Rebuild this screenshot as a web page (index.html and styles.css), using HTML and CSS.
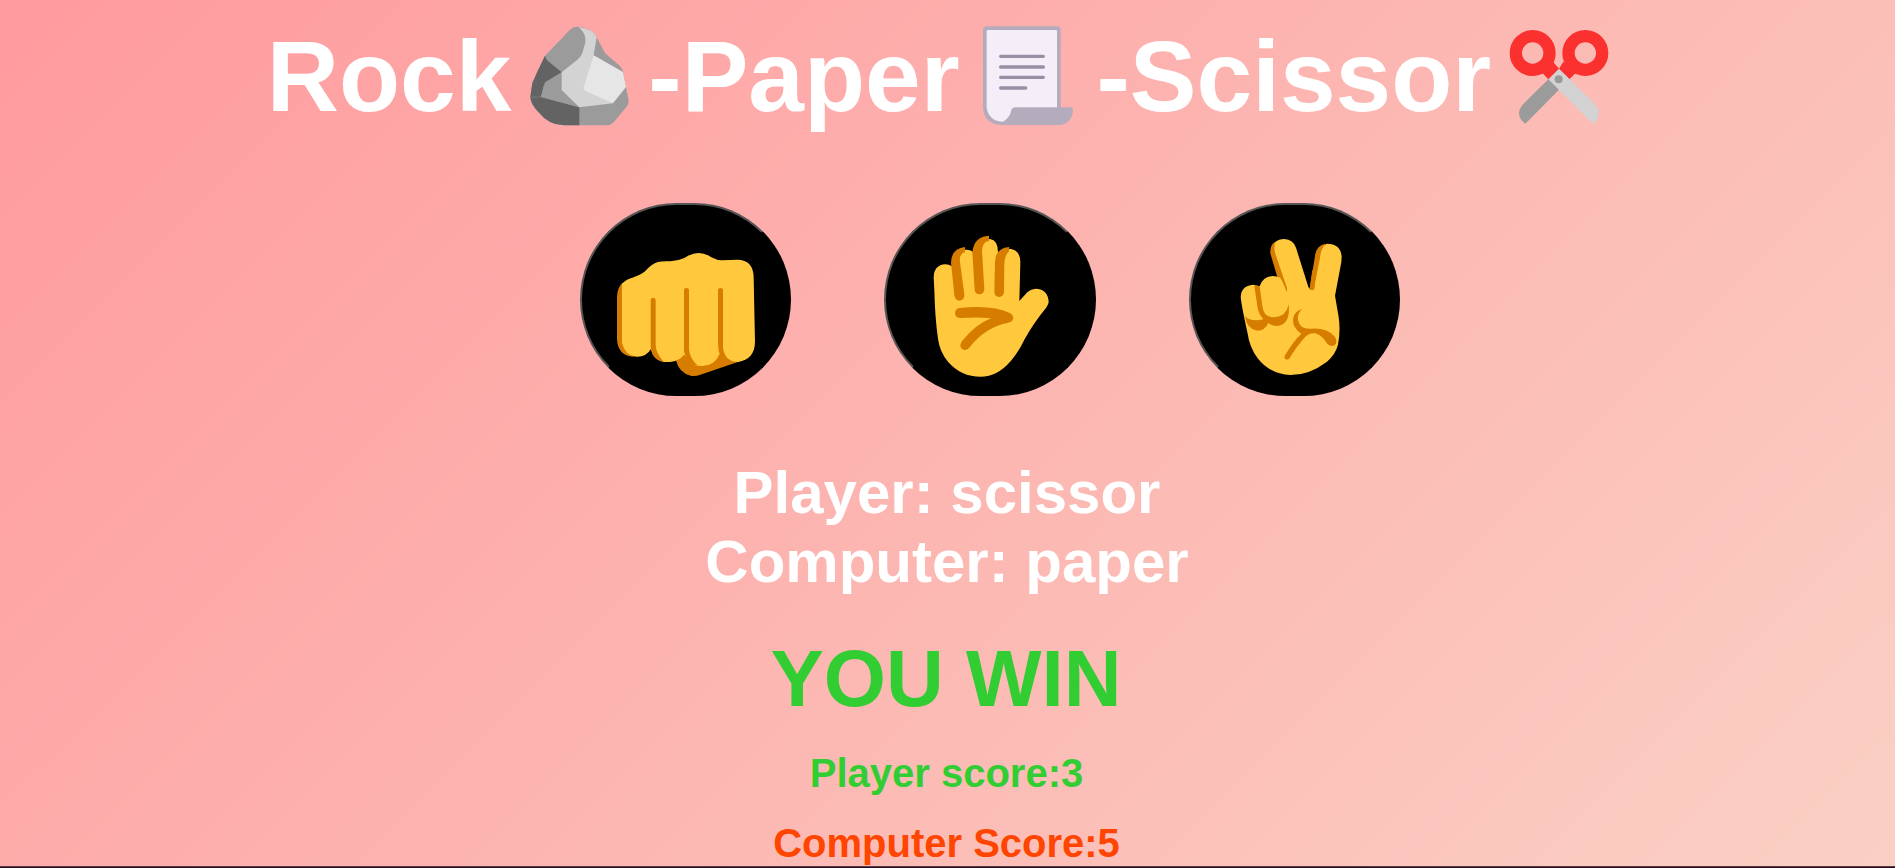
FILE: index.html
```html
<!DOCTYPE html>
<html lang="en">
<head>
<meta charset="utf-8">
<title>Rock Paper Scissor</title>
<link rel="stylesheet" href="styles.css">
</head>
<body>
<main class="game">
  <h1 class="title">
    <span>Rock</span>
    <svg class="title-icon" viewBox="1 0 411 360" aria-hidden="true">
      <path fill="#9b9b9b" d="M103 122L178 44Q187 35 199 35L215 37Q249 47 258 67L283 114L325 151Q337 162 339 180L346 216L354 257Q354 267 348 275L309 322Q300 331 289 331H160Q115 331 83 291Q59 266 59 246L65 204L80 170Z"/>
      <path fill="#636363" d="M103 122L109 136L153 172L103 202L91 246L206 277V331H160Q115 331 83 291Q59 266 59 246L65 204L80 170Z"/>
      <path fill="#9b9b9b" d="M153 172L112 198Q99 206 97 220L91 246L206 277L153 225Z"/>
      <path fill="#d3d3d3" d="M204 36Q249 43 258 67L249 121L307 265L206 277L153 225V172L202 133Q212 124 216 111L223 86Q228 66 215 48Z"/>
      <path fill="#e6e6e6" d="M249 121L337 171L346 216L307 265L226 229Q218 224 220 213Z"/>
      <path fill="none" stroke="#838383" stroke-width="2" d="M59 247L91 246"/>
    </svg>
    <span>-Paper</span>
    <svg class="title-icon" viewBox="0 0 411 360" aria-hidden="true">
      <path fill="#b4acbc" d="M79 34H292Q302 35 302 45V277H330Q339 278 339 288Q335 325 300 330H122Q72 325 69 278V44Q70 35 79 34Z"/>
      <path fill="#f3eef8" d="M84 45H287Q291 45 291 49V277H166Q156 277 154 286Q150 307 130 320Q87 319 80 278V49Q80 45 84 45Z"/>
      <path fill="none" stroke="#998ea4" stroke-width="10" stroke-linecap="round" d="M122 124H250M122 156H250M122 187H250M122 219H197"/>
    </svg>
    <span>-Scissor</span>
    <svg class="title-icon" viewBox="3 0 411 360" aria-hidden="true">
      <path fill="#9b9b9b" d="M207 224L106 326Q87 313 87 293Q88 280 98 269L179 189Z"/>
      <path fill="#fa312f" d="M158 175L177 195L207 163L238 193L257 174L220 140L207 161L189 140Z"/>
      <circle cx="128" cy="114" r="50.5" fill="none" stroke="#fa312f" stroke-width="37"/>
      <circle cx="286" cy="114" r="50.5" fill="none" stroke="#fa312f" stroke-width="37"/>
      <path fill="#d3d3d3" d="M207 161L315 268Q326 280 326 296Q326 313 309 326L175 193Z"/>
      <circle cx="206" cy="193" r="12" fill="#9b9b9b"/>
    </svg>
  </h1>

  <div class="choices">
    <button class="choice" aria-label="rock">
      <svg class="hand" viewBox="36 45 624 567">
        <path fill="#d67d00" d="M318 510Q326 548 362 557Q375 560 391 554L510 514L460 470L330 480ZM156 280Q141 295 141 323V446Q143 497 190 500L215 485L175 280ZM242 475Q249 511 280 516L310 505L290 450H243Z"/>
        <path fill="#ffc83d" d="M156 281Q168 268 187 263Q211 256 226 243Q244 222 264 216Q276 213 301 214Q323 213 343 204Q366 189 386 189Q405 189 424 202Q440 211 456 211L502 209Q550 209 551 263L555 456Q554 508 504 516Q486 516 476 507L450 491Q434 528 398 528L375 527L342 495Q327 513 300 516H280L243 477Q228 502 198 500Q165 496 156 459Z"/>
        <g fill="#d67d00">
          <path d="M242 330Q242 323 249 323Q257 323 257 331V465Q257 490 282 516Q242 508 242 465Z"/>
          <path d="M342 301Q342 294 349 294Q357 294 357 301V476Q358 504 384 528Q346 520 342 481Z"/>
          <path d="M444 301Q444 294 451 294Q459 294 459 301V472Q460 494 480 514Q452 504 446 484L444 460Z"/>
          <path d="M342 494Q351 514 380 528L375 535L325 520L318 513Q336 508 342 494ZM450 490Q463 512 490 515L450 530L402 528Q437 526 450 490Z"/>
        </g>
      </svg>
    </button>
    <button class="choice" aria-label="paper">
      <svg class="hand" viewBox="51 45 624 567">
        <path fill="#ffc83d" d="M194 262Q195 225 229 223Q240 223 248 228L266 188Q280 178 293 179Q306 179 314 188L338 157Q348 147 363 147Q387 150 387 188Q396 184 410 178L427 177Q454 182 454 217L451 333L475 307Q487 296 503 296Q538 300 539 337Q537 346 531 354Q495 397 466 449Q451 482 426 512Q385 560 335 560Q276 560 237 515Q212 485 207 446Q198 385 196 300Z"/>
        <g fill="#d67d00">
          <path d="M246 218Q247 176 288 171V186Q270 191 273 217L286 313Q287 330 272 332Q258 332 256 315Z"/>
          <path d="M310 187Q315 139 360 137V153Q340 155 339 183L346 297Q345 313 331 313Q318 312 317 299Z"/>
          <path d="M378 215Q379 174 421 171L419 186Q408 193 406 222L405 306Q404 320 390 321Q377 320 376 306Z"/>
          <path d="M272 354Q372 344 424 370Q433 375 433 384Q431 396 418 398Q348 411 301 473Q294 481 286 480Q274 477 274 465Q276 456 282 450Q321 403 366 385Q334 380 272 384Q258 383 258 369Q259 356 272 354Z"/>
        </g>
      </svg>
    </button>
    <button class="choice" aria-label="scissor">
      <svg class="hand" viewBox="33 45 624 567">
        <path fill="#d67d00" d="M283 157Q269 168 271 190L292 261L322 305L345 280L305 160ZM435 161Q410 167 406 192L389 296Q396 304 403 298L440 180Z"/>
        <path fill="#ffc83d" d="M182 321Q183 288 219 284L239 289Q248 260 278 258Q289 258 302 263L320 303L319 289L285 188Q281 168 286 156Q296 147 313 147Q340 149 348 173L385 291Q390 302 401 299L420 204Q423 170 440 161Q482 161 485 200L484 216L465 317L476 381Q482 424 474 464Q467 492 441 515Q388 555 332 555Q269 552 233 505Q208 470 203 431Q185 350 182 321Z"/>
        <g fill="#d67d00">
          <path d="M389 296L397 240L408 245L403 297Q396 304 389 296Z"/>
          <path d="M223 288Q231 284 239 290L247 347Q250 384 285 382Q319 379 326 343Q332 405 290 408Q275 407 265 399Q255 422 232 422Q199 416 195 378Q212 397 250 388Q234 370 232 348Z"/>
          <path d="M367 357Q351 370 354 390Q359 418 393 416Q440 412 463 439Q473 451 467 463Q457 473 443 463Q427 436 406 430Q389 427 376 440Q346 474 329 504Q323 512 315 506Q311 501 317 493Q339 455 364 431Q338 415 339 388Q342 364 367 357Z"/>
        </g>
        <path fill="none" stroke="#d67d00" stroke-width="3" d="M301 263Q319 280 320 304"/>
      </svg>
    </button>
  </div>

  <div class="picks">Player: scissor</div>
  <div class="picks">Computer: paper</div>
  <div class="result">YOU WIN</div>
  <div class="score score-player">Player score:3</div>
  <div class="score score-computer">Computer Score:5</div>
</main>
<footer class="edge"></footer>
</body>
</html>
```

FILE: styles.css
```css
body {
  margin: 0;
  height: 868px;
  overflow: hidden;
  display: flex;
  flex-direction: column;
  font-family: Arial, "Liberation Sans", sans-serif;
  font-weight: bold;
  line-height: 1.15;
}

.game {
  box-sizing: border-box;
  height: 866px;
  padding-top: 19px;
  display: flex;
  flex-direction: column;
  align-items: center;
  background: linear-gradient(135deg, #ff9a9e 0%, #fad0c4 100%);
}

.title {
  display: flex;
  height: 115px;
  margin: 0;
  font-size: 100px;
  color: #fff;
}

.title-icon {
  width: 137px;
  height: 120px;
  margin-top: -4px;
}

.choices {
  display: flex;
  gap: 93px;
  margin: 69px 0 62px 85px;
}

.choice {
  box-sizing: border-box;
  width: 211.5px;
  height: 193px;
  padding: 0;
  border: 2px solid;
  border-color: #555 #000 #000 #555;
  border-radius: 100px;
  background: #000;
}

.hand {
  display: block;
  width: 208px;
  height: 189px;
}

.picks {
  margin-right: 1px;
  font-size: 60px;
  color: #fff;
}

.result {
  margin: 37px 3px 25px 0;
  font-size: 80px;
  color: #32cd32;
}

.score {
  margin-right: 2px;
  font-size: 40px;
}

.score-player {
  margin-bottom: 24px;
  color: #32cd32;
}

.score-computer {
  color: #ff4500;
}

.edge {
  box-sizing: border-box;
  height: 2px;
  border-top: 1px solid #553c45;
  background: #2d0a20;
}
```
